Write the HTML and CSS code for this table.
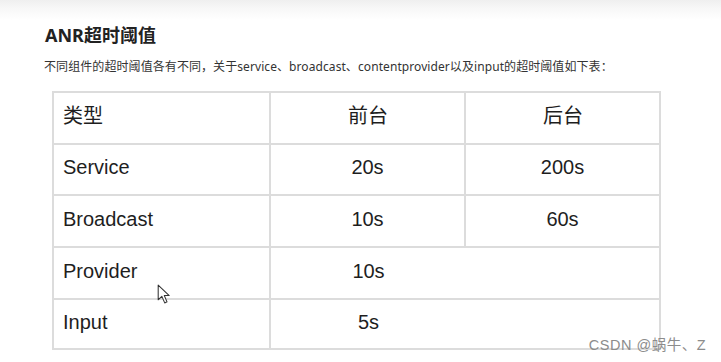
FILE: index.html
```html
<!DOCTYPE html>
<html lang="zh-CN">
<head>
<meta charset="utf-8">
<title>ANR超时阈值</title>
<link rel="stylesheet" href="styles.css">
</head>
<body>
<div class="page">
  <h1 class="title">ANR超时阈值</h1>
  <p class="desc">不同组件的超时阈值各有不同，关于service、broadcast、contentprovider以及input的超时阈值如下表：</p>
  <table class="grid">
    <colgroup>
      <col class="c1"><col class="c2"><col class="c3">
    </colgroup>
    <tr class="r1">
      <td class="name">类型</td>
      <td class="val">前台</td>
      <td class="val">后台</td>
    </tr>
    <tr class="r2">
      <td class="name">Service</td>
      <td class="val">20s</td>
      <td class="val">200s</td>
    </tr>
    <tr class="r3">
      <td class="name">Broadcast</td>
      <td class="val">10s</td>
      <td class="val">60s</td>
    </tr>
    <tr class="r4">
      <td class="name">Provider</td>
      <td class="val span" colspan="2">10s</td>
    </tr>
    <tr class="r5">
      <td class="name">Input</td>
      <td class="val span" colspan="2">5s</td>
    </tr>
  </table>
  <svg class="cursor" width="15" height="21" viewBox="0 0 14 20" aria-hidden="true">
    <path d="M1 1 L1 15 L4.5 11.8 L7.2 18 L9.4 17 L6.8 11 L11.5 11 Z" fill="#fff" stroke="#333" stroke-width="1" stroke-linejoin="round"/>
  </svg>
  <div class="watermark">CSDN @蜗牛、Z</div>
</div>
</body>
</html>
```

FILE: styles.css
```css
html, body {
  margin: 0;
  padding: 0;
  background: #fff;
}

.page {
  position: relative;
  width: 721px;
  height: 362px;
  overflow: hidden;
  background: linear-gradient(to bottom, #efefef 0px, #f7f7f7 8px, #ffffff 20px);
  padding: 23px 0 0 0;
  box-sizing: border-box;
}

.title {
  margin: 0 0 0 45px;
  font-family: "Noto Sans", "Noto Sans CJK SC", sans-serif;
  font-size: 18px;
  font-weight: 700;
  line-height: 24px;
  color: #222;
}

.desc {
  margin: 11px 0 0 44px;
  font-family: "Noto Sans", "Noto Sans CJK SC", sans-serif;
  font-size: 12px;
  line-height: 18px;
  color: #333;
  letter-spacing: 0.08px;
}

.grid {
  margin: 15px 0 0 52px;
  border-collapse: collapse;
  table-layout: fixed;
  width: 607px;
  font-family: "Liberation Sans", Arial, sans-serif;
  font-size: 20px;
  color: #1e1e1e;
}

.c1 { width: 217px; }
.c2 { width: 195px; }
.c3 { width: 195px; }

.grid td {
  border: 2px solid #dcdcdc;
  padding: 0 0 5px 0;
  vertical-align: middle;
  line-height: 24px;
}

.r1 td { height: 45px; }
.r2 td { height: 44px; }
.r3 td { height: 45px; }
.r4 td { height: 45px; }
.r5 td { height: 43px; }

.name {
  text-align: left;
  padding-left: 9px !important;
}

.val {
  text-align: center;
}

.span {
  padding-right: 193px !important;
}

.cursor {
  position: absolute;
  left: 157px;
  top: 284px;
}

.watermark {
  position: absolute;
  right: 15px;
  bottom: 9px;
  font-family: "Liberation Sans", "Noto Sans CJK SC", sans-serif;
  font-size: 14.5px;
  line-height: 16px;
  color: #8c8c8c;
  letter-spacing: 0.5px;
}
```
